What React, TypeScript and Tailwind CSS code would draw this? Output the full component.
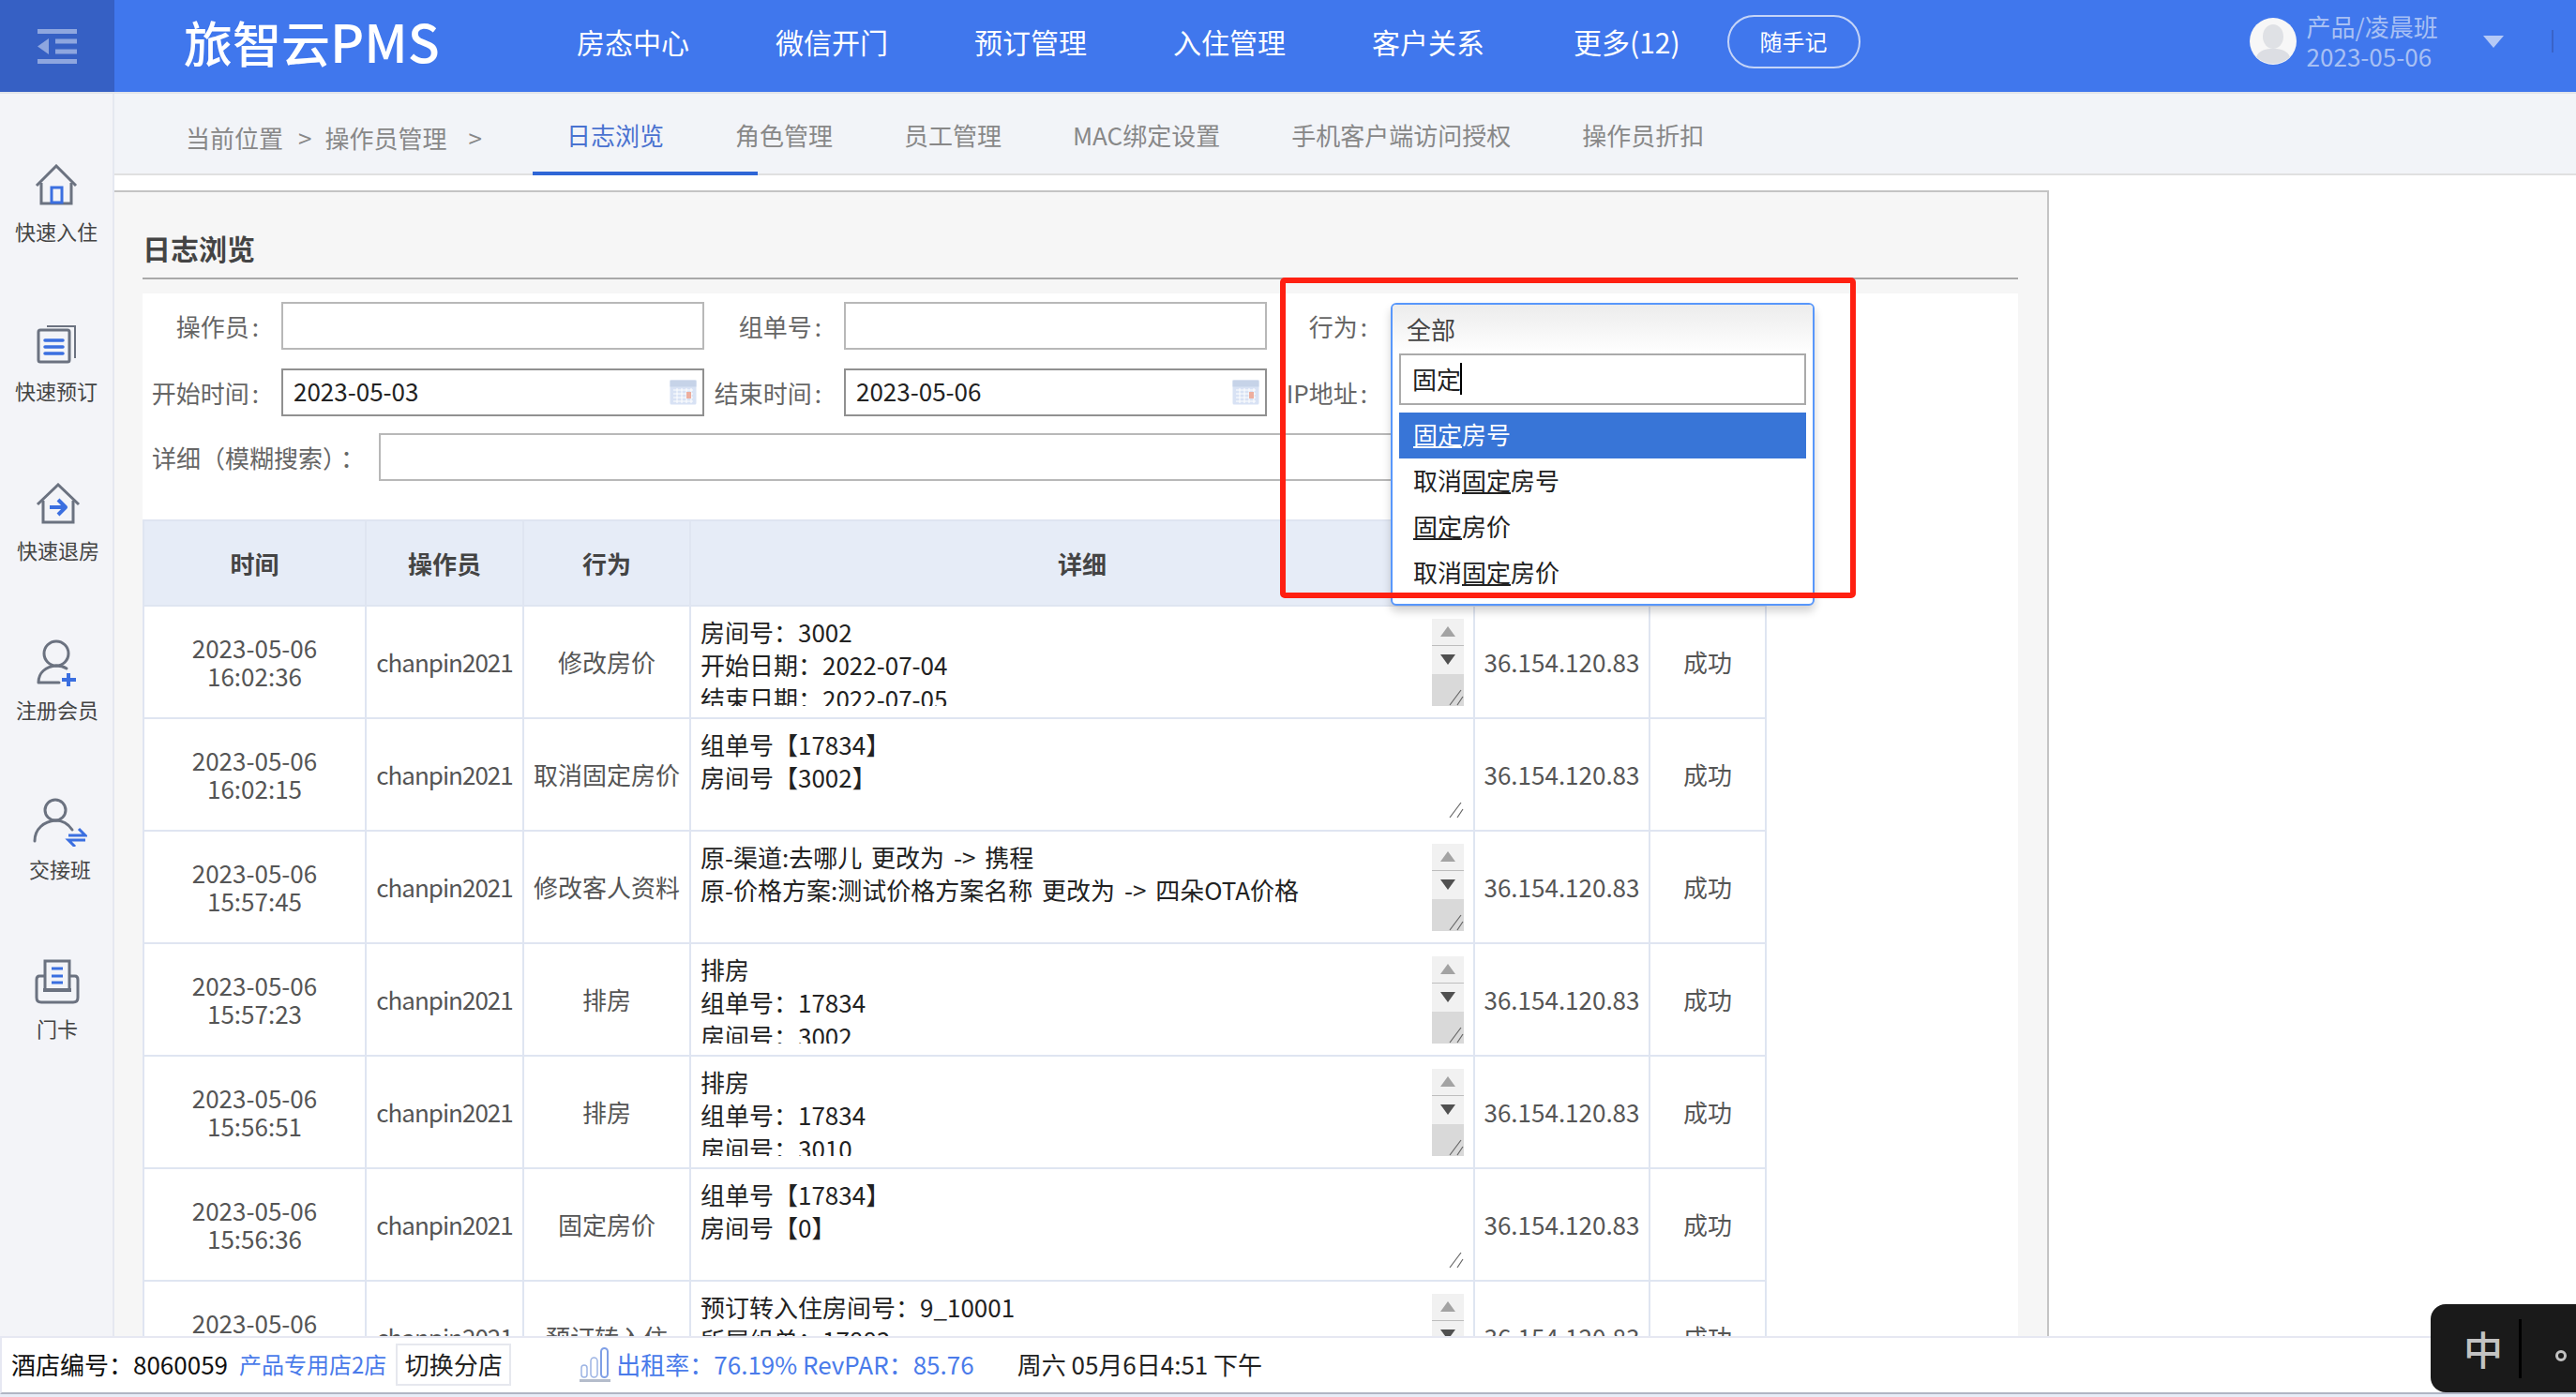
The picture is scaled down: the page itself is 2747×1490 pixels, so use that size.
import React from "react";

const GRAY = "#6b7280";
const BLUE = "#3b6fe0";

function IconCheckin() {
  return (
    <svg width="46" height="44" viewBox="0 0 46 44" fill="none">
      <path d="M2 23 L23 2 L44 23" stroke={GRAY} strokeWidth="3" strokeLinejoin="miter" />
      <path d="M7 20 V42 H39 V20" stroke={GRAY} strokeWidth="3" />
      <rect x="18" y="25" width="11" height="16" stroke={BLUE} strokeWidth="3" />
    </svg>
  );
}
function IconBooking() {
  return (
    <svg width="44" height="42" viewBox="0 0 44 42" fill="none">
      <path d="M12 2 H42 V36" stroke={GRAY} strokeWidth="2" />
      <rect x="3" y="6" width="33" height="34" rx="2" stroke={GRAY} strokeWidth="3" />
      <path d="M10 17 H29 M10 24 H29 M10 31 H29" stroke={BLUE} strokeWidth="3.5" strokeLinecap="round" />
    </svg>
  );
}
function IconCheckout() {
  return (
    <svg width="48" height="44" viewBox="0 0 48 44" fill="none">
      <path d="M2 23 L24 2 L46 23" stroke={GRAY} strokeWidth="3" />
      <path d="M8 19 V42 H40 V19" stroke={GRAY} strokeWidth="3" />
      <path d="M15 26 H30 M24 18 L32 26 L24 34" stroke={BLUE} strokeWidth="4" strokeLinejoin="round" />
    </svg>
  );
}
function IconMember() {
  return (
    <svg width="44" height="50" viewBox="0 0 44 50" fill="none">
      <circle cx="21" cy="15" r="13" stroke={GRAY} strokeWidth="3" />
      <path d="M2 46 C2 35 10 29 21 28 C25 28 29 29 32 31 M2 46 H24" stroke={GRAY} strokeWidth="3" strokeLinecap="round" />
      <path d="M34 36 V50 M27 43 H42" stroke={BLUE} strokeWidth="4" />
    </svg>
  );
}
function IconShift() {
  return (
    <svg width="58" height="52" viewBox="0 0 58 52" fill="none">
      <circle cx="24" cy="13" r="11" stroke={GRAY} strokeWidth="3" />
      <path d="M2 46 C2 33 12 25 24 24 C32 24 38 28 42 34" stroke={GRAY} strokeWidth="3" strokeLinecap="round" />
      <path d="M38 40 H56 L49 33 M56 45 H38 L45 52" stroke={BLUE} strokeWidth="3" />
    </svg>
  );
}
function IconCard() {
  return (
    <svg width="48" height="48" viewBox="0 0 48 48" fill="none">
      <path d="M11 33 V2 H37 V33" stroke={GRAY} strokeWidth="3" />
      <path d="M18 10 H30 M18 18 H30 M18 25 H30" stroke={BLUE} strokeWidth="3" />
      <path d="M11 18 H5 Q2 18 2 22 V41 Q2 46 7 46 H41 Q46 46 46 41 V22 Q46 18 43 18 H37" stroke={GRAY} strokeWidth="3" />
      <path d="M9 33 H39" stroke={GRAY} strokeWidth="4" />
    </svg>
  );
}

function Calendar() {
  return (
    <svg width="29" height="27" viewBox="0 0 29 27" className="opacity-80">
      <rect x="0.5" y="0.5" width="28" height="26" rx="1.5" fill="#cfdcf2" />
      <rect x="0.5" y="0.5" width="28" height="7" fill="#b9c9e3" />
      <path d="M4 11 H25 M4 15 H25 M4 19 H25 M4 23 H25 M8 9 V25 M13 9 V25 M18 9 V25 M23 9 V25" stroke="#ffffff" strokeWidth="1" />
      <rect x="18" y="13" width="5" height="7" fill="#e99a86" />
    </svg>
  );
}

function Resize() {
  return (
    <svg width="16" height="18" viewBox="0 0 16 18" fill="none">
      <path d="M1 17 L13 1 M9 17 L15 8" stroke="#666" strokeWidth="1.2" />
    </svg>
  );
}

function Scrollbar() {
  return (
    <div className="relative flex h-[93px] w-[34px] shrink-0 flex-col bg-[#f1f1f1]">
      <div className="flex h-[29px] items-center justify-center border-b border-[#bdbdbd]">
        <svg width="16" height="11" viewBox="0 0 16 11"><path d="M8 0 L16 11 H0 Z" fill="#a3a3a3" /></svg>
      </div>
      <div className="flex h-[30px] items-center justify-center">
        <svg width="16" height="11" viewBox="0 0 16 11"><path d="M0 0 H16 L8 11 Z" fill="#505050" /></svg>
      </div>
      <div className="flex flex-1 items-end justify-end bg-[#d9d9d9]">
        <Resize />
      </div>
    </div>
  );
}

type Row = { d: string; t: string; a: string; lines: string[]; scroll: boolean };

const rows: Row[] = [
  { d: "2023-05-06", t: "16:02:36", a: "修改房价", lines: ["房间号：3002", "开始日期：2022-07-04", "结束日期：2022-07-05"], scroll: true },
  { d: "2023-05-06", t: "16:02:15", a: "取消固定房价", lines: ["组单号【17834】", "房间号【3002】"], scroll: false },
  { d: "2023-05-06", t: "15:57:45", a: "修改客人资料", lines: ["原-渠道:去哪儿 更改为 -> 携程", "原-价格方案:测试价格方案名称 更改为 -> 四朵OTA价格"], scroll: true },
  { d: "2023-05-06", t: "15:57:23", a: "排房", lines: ["排房", "组单号：17834", "房间号：3002"], scroll: true },
  { d: "2023-05-06", t: "15:56:51", a: "排房", lines: ["排房", "组单号：17834", "房间号：3010"], scroll: true },
  { d: "2023-05-06", t: "15:56:36", a: "固定房价", lines: ["组单号【17834】", "房间号【0】"], scroll: false },
  { d: "2023-05-06", t: "15:55:12", a: "预订转入住", lines: ["预订转入住房间号：9_10001", "所属组单：17883"], scroll: true },
];

const navs = ["房态中心", "微信开门", "预订管理", "入住管理", "客户关系"];

const side = [
  { t: "快速入住", i: <IconCheckin />, c: "pl-0" },
  { t: "快速预订", i: <IconBooking />, c: "pl-0" },
  { t: "快速退房", i: <IconCheckout />, c: "pl-[4px]" },
  { t: "注册会员", i: <IconMember />, c: "pl-[2px]" },
  { t: "交接班", i: <IconShift />, c: "pl-[8px]" },
  { t: "门卡", i: <IconCard />, c: "pl-[2px]" },
];

function Label({ text, lw }: { text: string; lw: string }) {
  return (
    <div className={`${lw} shrink-0 whitespace-nowrap text-right text-[#666]`}>
      {text}
      <span className="ml-[3px]">:</span>
    </div>
  );
}

function Field({ label, lw, value, dark, cal }: { label: string; lw: string; value?: string; dark?: boolean; cal?: boolean }) {
  return (
    <>
      <Label text={label} lw={lw} />
      <div
        className={`ml-[24px] flex h-[51px] w-[451px] shrink-0 items-center justify-between border-2 bg-white pl-[11px] pr-[6px] text-[#222] ${dark ? "border-[#909090]" : "border-[#b8b8b8]"}`}
      >
        <span className="-mt-[3px]">{value}</span>
        {cal ? <Calendar /> : null}
      </div>
    </>
  );
}

function Opt({ pre, post, active }: { pre?: string; post: string; active?: boolean }) {
  return (
    <div className={`h-[49px] pl-[15px] leading-[46px] ${active ? "bg-[#3875d7] text-white" : "text-[#222]"}`}>
      {pre}
      <span className="underline decoration-2 underline-offset-2">固定</span>
      {post}
    </div>
  );
}

export default function App() {
  return (
    <div className="relative h-[1490px] w-[2747px] overflow-hidden bg-white font-['Noto_Sans_CJK_SC','Noto_Sans',sans-serif] text-[26px] leading-[30px]">
      {/* header */}
      <header className="flex h-[100px] border-b-2 border-[#e1e4ea] bg-[#4077ed] text-white">
        <div className="flex h-full w-[122px] shrink-0 items-center justify-center bg-[#3660c4]">
          <svg width="44" height="37" viewBox="0 0 44 37" fill="none">
            <path d="M1 2.5 H43 M1 34.5 H43 M20 13 H43 M20 24 H43" stroke="#8ea6df" strokeWidth="5" />
            <path d="M13 10 V27 L1 18.5 Z" fill="#8ea6df" />
          </svg>
        </div>
        <div className="flex flex-1 items-center pb-[10px]">
          <div className="ml-[74px] w-[274px] shrink-0 whitespace-nowrap text-[52px] font-medium leading-[60px]">
            旅智云<span className="text-[56px]">PMS</span>
          </div>
          <nav className="ml-[145px] flex items-center gap-[92px] text-[30px] leading-[40px]">
            {navs.map((n) => (
              <span key={n}>{n}</span>
            ))}
            <span className="ml-[3px]">更多(12)</span>
          </nav>
          <div className="ml-[50px] flex h-[57px] w-[142px] items-center justify-center rounded-[29px] border-2 border-[#c4d4f8] text-[24px]">
            随手记
          </div>
          <div className="ml-[415px] flex items-center">
            <svg width="50" height="50" viewBox="0 0 50 50">
              <circle cx="25" cy="25" r="25" fill="#f7f7f7" />
              <ellipse cx="25" cy="20" rx="11" ry="13" fill="#dfe1e5" />
              <path d="M7 42 C10 34 18 33 25 33 C32 33 40 34 43 42 Q35 49 25 49 Q15 49 7 42 Z" fill="#dcdee3" />
            </svg>
            <div className="ml-[11px] w-[188px] text-[26px] leading-[32px] text-[#a8c0f4]">
              <div>产品/凌晨班</div>
              <div>2023-05-06</div>
            </div>
            <svg width="22" height="13" viewBox="0 0 22 13">
              <path d="M0 0 H22 L11 13 Z" fill="#b5c9f6" />
            </svg>
            <div className="ml-[51px] h-[24px] w-[2px] bg-[#3a63c8]" />
          </div>
        </div>
      </header>

      <div className="flex h-[1390px]">
        {/* sidebar */}
        <aside className="flex w-[122px] shrink-0 flex-col border-r-2 border-[#e5e8f0] bg-[#f3f4f8] pt-[72px] text-[22px] text-[#444]">
          {side.map((s) => (
            <div key={s.t} className={`flex h-[170px] shrink-0 flex-col items-center ${s.c}`}>
              <div className="flex h-[50px] items-center justify-center">{s.i}</div>
              <div className="mt-[9px] whitespace-nowrap">{s.t}</div>
            </div>
          ))}
        </aside>

        <main className="min-w-0 flex-1">
          {/* subnav */}
          <div className="flex h-[87px] border-b-2 border-[#e0e0e0] bg-[#f2f4f8] leading-[36px] text-[#888]">
            <div className="ml-[76px] flex pt-[29px]">
              <span>当前位置</span>
              <span className="ml-[16px]">&gt;</span>
              <span className="ml-[14px]">操作员管理</span>
              <span className="ml-[23px]">&gt;</span>
            </div>
            <div className="ml-[90px] flex gap-[76px] pt-[26px] whitespace-nowrap">
              <span className="relative text-[#4a72d0]">
                日志浏览
                <span className="absolute left-[-36px] top-[57px] h-[4px] w-[240px] bg-[#2f66d6]" />
              </span>
              <span>角色管理</span>
              <span>员工管理</span>
              <span>MAC绑定设置</span>
              <span>手机客户端访问授权</span>
              <span>操作员折扣</span>
            </div>
          </div>

          {/* panel */}
          <section className="mt-[16px] h-[1300px] w-[2063px] border-r-2 border-t-2 border-[#c4c4c4] bg-[#f6f6f6] pl-[30px]">
            <div className="flex h-[93px] w-[2000px] items-end border-b-2 border-[#a9a9a9] pb-[12px] text-[30px] font-bold leading-[40px] text-[#444]">
              日志浏览
            </div>
            <div className="relative mt-[15px] w-[2000px] bg-white">
              {/* form */}
              <div className="flex flex-col pb-[41px] pt-[9px]">
                <div className="flex h-[51px] items-center">
                  <Field label="操作员" lw="w-[124px]" />
                  <Field label="组单号" lw="w-[125px]" />
                  <Label text="行为" lw="w-[107px]" />
                </div>
                <div className="mt-[20px] flex h-[51px] items-center">
                  <Field label="开始时间" lw="w-[124px]" value="2023-05-03" dark cal />
                  <Field label="结束时间" lw="w-[125px]" value="2023-05-06" dark cal />
                  <Label text="IP地址" lw="w-[107px]" />
                </div>
                <div className="mt-[18px] flex h-[51px] items-center">
                  <div className="ml-[10px] w-[242px] shrink-0 whitespace-nowrap text-[#666]">
                    详细（模糊搜索）<span className="ml-[6px]">：</span>
                  </div>
                  <div className="h-[51px] w-[1090px] border-2 border-[#b8b8b8] bg-white" />
                </div>
              </div>

              {/* table */}
              <table className="w-[1730px] table-fixed border-collapse bg-white text-center text-[#555]">
                <colgroup>
                  <col className="w-[237px]" />
                  <col className="w-[168px]" />
                  <col className="w-[178px]" />
                  <col className="w-[836px]" />
                  <col className="w-[187px]" />
                  <col className="w-[124px]" />
                </colgroup>
                <thead>
                  <tr className="h-[91px] bg-[#e6ecf7] font-bold text-[#444]">
                    <th className="border-2 border-[#dfe5f1]">时间</th>
                    <th className="border-2 border-[#dfe5f1]">操作员</th>
                    <th className="border-2 border-[#dfe5f1]">行为</th>
                    <th className="border-2 border-[#dfe5f1]">详细</th>
                    <th className="border-2 border-[#dfe5f1]">IP地址</th>
                    <th className="border-2 border-[#dfe5f1]">结果</th>
                  </tr>
                </thead>
                <tbody>
                  {rows.map((r) => (
                    <tr key={r.t} className="h-[120px]">
                      <td className="border-2 border-[#dfe5f1]">
                        <div>{r.d}</div>
                        <div>{r.t}</div>
                      </td>
                      <td className="border-2 border-[#dfe5f1] whitespace-nowrap tracking-[-1px]">chanpin2021</td>
                      <td className="border-2 border-[#dfe5f1] whitespace-nowrap">{r.a}</td>
                      <td className="border-2 border-[#dfe5f1] pl-[10px] pr-[10px] text-left text-[#222]">
                        <div className="relative flex h-[93px] overflow-hidden">
                          <div className="-mt-[4px] min-w-0 flex-1 whitespace-nowrap leading-[35.5px] [word-spacing:4px]">
                            {r.lines.map((l) => (
                              <div key={l}>{l}</div>
                            ))}
                          </div>
                          {r.scroll ? (
                            <Scrollbar />
                          ) : (
                            <div className="absolute bottom-0 right-0">
                              <Resize />
                            </div>
                          )}
                        </div>
                      </td>
                      <td className="border-2 border-[#dfe5f1] whitespace-nowrap">36.154.120.83</td>
                      <td className="border-2 border-[#dfe5f1]">成功</td>
                    </tr>
                  ))}
                </tbody>
              </table>

              {/* select dropdown */}
              <div className="absolute left-[1331px] top-[10px] z-10 h-[323px] w-[452px] rounded-[6px] border-2 border-[#5897fb] bg-white shadow-[0_6px_10px_rgba(0,0,0,0.18)]">
                <div className="h-[52px] rounded-t-[4px] bg-gradient-to-b from-[#ececec] to-white pl-[15px] pt-[11px] text-[#444]">全部</div>
                <div className="mx-[7px] flex h-[55px] items-center border-2 border-[#aaa] bg-white pb-[2px] pl-[12px] text-[#222]">
                  固定
                  <span className="ml-[-1px] h-[34px] w-[2px] bg-black" />
                </div>
                <div className="mx-[7px] mt-[8px]">
                  <Opt post="房号" active />
                  <Opt pre="取消" post="房号" />
                  <Opt post="房价" />
                  <Opt pre="取消" post="房价" />
                </div>
              </div>

              {/* red annotation */}
              <div className="pointer-events-none absolute left-[1213px] top-[-17px] z-20 h-[342px] w-[614px] rounded-[5px] border-[6px] border-[#ff2011]" />
            </div>
          </section>
        </main>
      </div>

      {/* bottom bar */}
      <footer className="fixed bottom-0 left-0 z-30 w-full bg-[#e8edf7]">
        <div className="flex h-[62px] items-center border-b-2 border-l-2 border-t-2 border-b-[#b0b5c4] border-l-[#e6e8f2] border-t-[#e6e8f2] bg-white pb-[2px] pl-[10px] leading-[36px] text-[#111]">
          <span>酒店编号：8060059</span>
          <span className="ml-[12px] text-[24px] text-[#4a7bea]">产品专用店2店</span>
          <span className="ml-[10px] flex h-[45px] w-[123px] items-center justify-center border-2 border-[#e6e8ee] text-[#222]">切换分店</span>
          <svg className="ml-[73px]" width="33" height="38" viewBox="0 0 33 38" fill="none">
            <rect x="2" y="20" width="6" height="13" rx="3" stroke="#9db4e4" strokeWidth="1.5" />
            <rect x="12" y="12" width="7" height="21" rx="3.5" stroke="#9db4e4" strokeWidth="1.5" />
            <rect x="23" y="2" width="7" height="31" rx="3.5" stroke="#7f9fe6" strokeWidth="2" />
            <path d="M0 36.5 H33" stroke="#b4bccb" strokeWidth="3" />
          </svg>
          <span className="ml-[6px] whitespace-nowrap text-[#4a7bea]">出租率：76.19% RevPAR：85.76</span>
          <span className="ml-[46px] whitespace-nowrap text-[#222]">周六 05月6日4:51 下午</span>
        </div>
        <div className="h-[3px]" />
      </footer>

      {/* IME indicator */}
      <div className="fixed bottom-[5px] right-0 z-40 flex h-[94px] w-[155px] items-center rounded-l-[16px] bg-[#1a1a1a]">
        <span className="ml-[34px] w-[44px] text-center text-[42px] font-medium leading-[50px] text-[#c2c2c2]">中</span>
        <span className="ml-[16px] h-[63px] w-[3px] bg-black" />
        <span className="ml-[36px] mt-[16px] h-[12px] w-[12px] rounded-full border-[3px] border-[#c2c2c2]" />
      </div>
    </div>
  );
}
